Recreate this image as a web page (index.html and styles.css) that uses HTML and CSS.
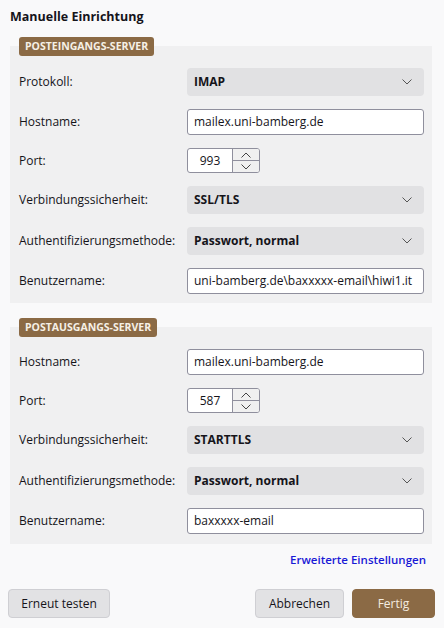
FILE: index.html
```html
<!DOCTYPE html>
<html lang="de">
<head>
<meta charset="utf-8">
<title>Manuelle Einrichtung</title>
<link rel="stylesheet" href="styles.css">
</head>
<body>
<div class="page">
  <h1 class="title">Manuelle Einrichtung</h1>

  <section class="group">
    <div class="badge">POSTEINGANGS-SERVER</div>
    <div class="box">
      <div class="row">
        <span class="label">Protokoll:</span>
        <div class="select"><span>IMAP</span><svg class="chev" viewBox="0 0 10 6" width="10" height="6"><path d="M0.5 0.5l4.5 4.5 4.5-4.5" fill="none" stroke="#555" stroke-width="1"/></svg></div>
      </div>
      <div class="row">
        <span class="label">Hostname:</span>
        <div class="input">mailex.uni-bamberg.de</div>
      </div>
      <div class="row">
        <span class="label">Port:</span>
        <div class="port">
          <span class="port-val">993</span>
          <span class="spin">
            <span class="spin-btn"><svg viewBox="0 0 10 6" width="10" height="6"><path d="M0.5 5.5l4.5-4.5 4.5 4.5" fill="none" stroke="#444" stroke-width="1"/></svg></span>
            <span class="spin-btn"><svg viewBox="0 0 10 6" width="10" height="6"><path d="M0.5 0.5l4.5 4.5 4.5-4.5" fill="none" stroke="#444" stroke-width="1"/></svg></span>
          </span>
        </div>
      </div>
      <div class="row">
        <span class="label">Verbindungssicherheit:</span>
        <div class="select"><span>SSL/TLS</span><svg class="chev" viewBox="0 0 10 6" width="10" height="6"><path d="M0.5 0.5l4.5 4.5 4.5-4.5" fill="none" stroke="#555" stroke-width="1"/></svg></div>
      </div>
      <div class="row">
        <span class="label">Authentifizierungsmethode:</span>
        <div class="select"><span>Passwort, normal</span><svg class="chev" viewBox="0 0 10 6" width="10" height="6"><path d="M0.5 0.5l4.5 4.5 4.5-4.5" fill="none" stroke="#555" stroke-width="1"/></svg></div>
      </div>
      <div class="row">
        <span class="label">Benutzername:</span>
        <div class="input">uni-bamberg.de\baxxxxx-email\hiwi1.it</div>
      </div>
    </div>
  </section>

  <section class="group group2">
    <div class="badge">POSTAUSGANGS-SERVER</div>
    <div class="box">
      <div class="row">
        <span class="label">Hostname:</span>
        <div class="input">mailex.uni-bamberg.de</div>
      </div>
      <div class="row">
        <span class="label">Port:</span>
        <div class="port">
          <span class="port-val">587</span>
          <span class="spin">
            <span class="spin-btn"><svg viewBox="0 0 10 6" width="10" height="6"><path d="M0.5 5.5l4.5-4.5 4.5 4.5" fill="none" stroke="#444" stroke-width="1"/></svg></span>
            <span class="spin-btn"><svg viewBox="0 0 10 6" width="10" height="6"><path d="M0.5 0.5l4.5 4.5 4.5-4.5" fill="none" stroke="#444" stroke-width="1"/></svg></span>
          </span>
        </div>
      </div>
      <div class="row">
        <span class="label">Verbindungssicherheit:</span>
        <div class="select"><span>STARTTLS</span><svg class="chev" viewBox="0 0 10 6" width="10" height="6"><path d="M0.5 0.5l4.5 4.5 4.5-4.5" fill="none" stroke="#555" stroke-width="1"/></svg></div>
      </div>
      <div class="row">
        <span class="label">Authentifizierungsmethode:</span>
        <div class="select"><span>Passwort, normal</span><svg class="chev" viewBox="0 0 10 6" width="10" height="6"><path d="M0.5 0.5l4.5 4.5 4.5-4.5" fill="none" stroke="#555" stroke-width="1"/></svg></div>
      </div>
      <div class="row">
        <span class="label">Benutzername:</span>
        <div class="input">baxxxxx-email</div>
      </div>
    </div>
  </section>

  <div class="advanced"><a class="link" href="#">Erweiterte Einstellungen</a></div>

  <div class="buttons">
    <button class="btn btn-retry">Erneut testen</button>
    <div class="btn-right">
      <button class="btn btn-cancel">Abbrechen</button>
      <button class="btn primary">Fertig</button>
    </div>
  </div>
</div>
</body>
</html>
```

FILE: styles.css
```css
* { box-sizing: border-box; }
html, body { margin: 0; padding: 0; }
body {
  background: #f9f9fa;
  font-family: "Open Sans", "Noto Sans", sans-serif;
  font-size: 12px;
  color: #15141a;
  width: 444px;
  height: 628px;
  overflow: hidden;
}
.page { padding: 8px 12px 0 10px; }
.title {
  margin: 0;
  font-size: 12.5px;
  font-weight: 700;
  line-height: 18px;
  height: 18px;
}
.group {
  margin-top: 11px;
  display: flex;
  flex-direction: column;
  align-items: flex-start;
}
.group2 { margin-top: 15px; }
.badge {
  position: relative;
  z-index: 1;
  margin-left: 9px;
  margin-bottom: -10px;
  height: 19px;
  line-height: 19px;
  padding: 0 6px;
  background: #8b6a45;
  color: #f6f0e6;
  font-size: 10.5px;
  font-weight: 700;
  border-radius: 3px;
  white-space: nowrap;
}
.box {
  align-self: stretch;
  background: #f0f0f1;
  padding: 22px 8px 9px 9px;
  display: flex;
  flex-direction: column;
  gap: 13px;
}
.group2 .box { padding-bottom: 10px; }
.row { display: flex; align-items: center; line-height: 16px; }
.label { width: 168px; flex: none; }
.select {
  flex: 1;
  height: 28px;
  background: #e1e1e3;
  border-radius: 4px;
  display: flex;
  align-items: center;
  justify-content: space-between;
  padding: 0 12px 0 7px;
  font-weight: 700;
}
.chev { display: block; }
.input {
  flex: 1;
  min-width: 0;
  height: 26px;
  background: #fff;
  border: 1px solid #8f8f9d;
  border-radius: 3px;
  display: flex;
  align-items: center;
  padding: 0 6px;
  white-space: nowrap;
  overflow: hidden;
}
.port {
  display: flex;
  width: 73px;
  height: 25px;
  background: #fff;
  border: 1px solid #8f8f9d;
  border-radius: 3px;
  overflow: hidden;
}
.port-val {
  width: 44px;
  display: flex;
  align-items: center;
  justify-content: center;
}
.spin {
  flex: 1;
  display: flex;
  flex-direction: column;
  border-left: 1px solid #8f8f9d;
}
.spin-btn {
  flex: 1;
  display: flex;
  align-items: center;
  justify-content: center;
  background: #f0f0f0;
}
.spin-btn + .spin-btn { border-top: 1px solid #8f8f9d; }
.spin-btn svg { display: block; }
.advanced {
  display: flex;
  justify-content: flex-end;
  margin-top: 8px;
  padding-right: 6px;
  line-height: 16px;
  height: 16px;
}
.link {
  color: #1a1ad6;
  font-weight: 600;
  font-size: 11.5px;
  text-decoration: none;
}
.buttons {
  margin-top: 21px;
  margin-left: -2px;
  margin-right: -3px;
  display: flex;
  justify-content: space-between;
}
.btn-right { display: flex; gap: 8px; }
.btn {
  font-family: inherit;
  font-size: 12px;
  color: #15141a;
  height: 29px;
  padding: 0;
  background: #e2e2e4;
  border: 1px solid #cfcfd3;
  border-radius: 4px;
  white-space: nowrap;
}
.btn-retry { width: 102px; }
.btn-cancel { width: 89px; }
.btn.primary {
  background: #8b6a45;
  border-color: #8b6a45;
  color: #f4ece0;
  width: 83px;
}
```
